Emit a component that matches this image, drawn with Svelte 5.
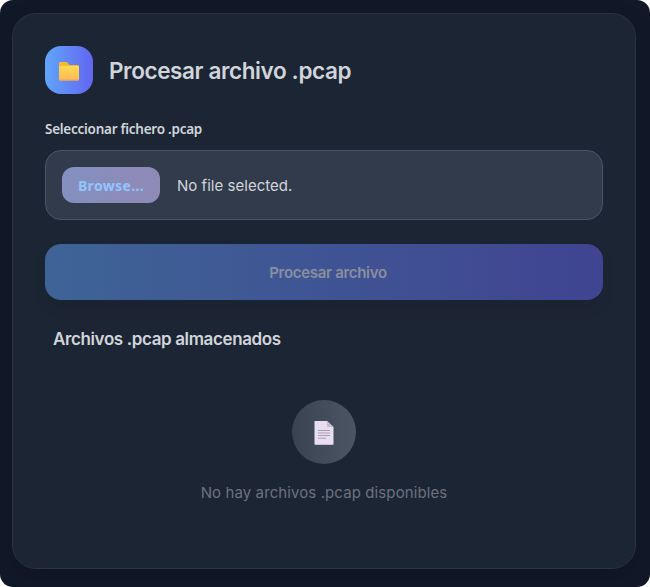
<script>
  const files = [];
  let selected = $state(null);
  let picker;
</script>

<main class="page">
  <section class="card">
    <header>
      <span class="badge">
        <svg width="22" height="20" viewBox="0 0 22 20" aria-hidden="true">
          <defs>
            <linearGradient id="folder" x1="0" y1="0" x2="0" y2="1">
              <stop offset="0" stop-color="#ffdb50" />
              <stop offset="1" stop-color="#ffb758" />
            </linearGradient>
          </defs>
          <path d="M1 2q0-1 1-1h6q1 0 1.600.8L11.500 4H20q1 0 1 1v5H1z" fill="#f9b73c" />
          <rect x="1" y="5" width="20" height="14.500" rx="1" fill="url(#folder)" />
          <path d="M1.500 19h19" stroke="#eda552" />
        </svg>
      </span>
      <h1>Procesar archivo .pcap</h1>
    </header>

    <label for="capture">Seleccionar fichero .pcap</label>
    <div class="picker">
      <button class="browse" onclick={() => picker.click()}>Browse...</button>
      <span class="name">{selected ?? 'No file selected.'}</span>
      <input id="capture" type="file" accept=".pcap" hidden bind:this={picker}
        onchange={(e) => (selected = e.currentTarget.files[0]?.name ?? null)} />
    </div>

    <button class="process" disabled={!selected}><span>Procesar archivo</span></button>

    <h2>Archivos .pcap almacenados</h2>
    {#if files.length === 0}
      <div class="empty">
        <span class="circle">
          <svg width="20" height="26" viewBox="0 0 20 26" aria-hidden="true">
            <path d="M1 1h12l6.500 6v17.500H1q-.5 0-.5-.5V1.500Q.5 1 1 1z" fill="#e7dff0" />
            <path d="M13 1l6.500 6H14q-1 0-1-1z" fill="#c5bdcc" />
            <path d="M1 24.500h18" stroke="#cabcdc" />
            <path d="M4 10.500h12M4 13h12M4 15.500h12M4 18.200h8" stroke="#a99fb1" stroke-width="1.100" />
          </svg>
        </span>
        <p>No hay archivos .pcap disponibles</p>
      </div>
    {/if}
  </section>
</main>

<style>
  :global(body) { background: #fff; }
  * { box-sizing: border-box; }
  .page {
    height: 587px;
    padding: 13px 14px 18px 12px;
    border-radius: 13px;
    background: #111827;
    overflow: hidden;
    font-family: Inter, sans-serif;
    color: #d1d5db;
  }
  .card {
    height: 556px;
    padding: 32px;
    border: 1px solid #2a3441;
    border-radius: 24px;
    background: #1c2533;
    box-shadow: 0 8px 24px rgba(0, 0, 0, 0.13);
  }
  header { display: flex; align-items: center; gap: 16px; height: 48px; }
  .badge {
    display: flex; align-items: center; justify-content: center;
    width: 48px; height: 48px; padding: 2px 1px 0 0;
    border-radius: 16px;
    background: linear-gradient(90deg, #60a5fa, #6366f1);
  }
  h1 { margin: 0; padding-top: 2px; font-size: 22.5px; line-height: 32px; font-weight: 600; letter-spacing: -0.39px; white-space: nowrap; }
  label {
    display: block; margin: 25px 0 11px;
    font: 600 13.500px/20px "Noto Sans", sans-serif;
    letter-spacing: -0.26px;
  }
  .picker {
    display: flex; align-items: center; gap: 17px;
    height: 70px; padding: 0 16px;
    border: 1px solid #4b5563; border-radius: 16px;
    background: #323b4b;
  }
  button { border: 0; }
  .browse {
    width: 98px; height: 36px; padding: 1px 0 0;
    border-radius: 12px;
    background: linear-gradient(90deg, #8490c0, #9089b6);
    color: #93c5fd;
    font: 700 14px/20px "Noto Sans", sans-serif;
    letter-spacing: 0.36px;
  }
  .name { padding-top: 2px; font-size: 15px; line-height: 24px; letter-spacing: 0.03px; white-space: nowrap; }
  .process {
    display: block; width: 100%; height: 56px; margin-top: 24px; padding: 2px 0 0 8px;
    border-radius: 16px;
    background: linear-gradient(90deg, #3e6497, #404491);
    box-shadow: 0 8px 15px rgba(0, 0, 0, 0.06);
    color: #898f9e;
    font: 600 15px/24px Inter, sans-serif;
    letter-spacing: -0.3px;
  }
  h2 { margin: 26px 0 0 8px; font-size: 17px; line-height: 27px; font-weight: 600; letter-spacing: -0.38px; white-space: nowrap; }
  .empty { display: flex; flex-direction: column; align-items: center; padding-top: 47px; }
  .circle {
    display: flex; align-items: center; justify-content: center;
    width: 64px; height: 64px; padding-top: 1px;
    border-radius: 50%;
    background: linear-gradient(90deg, #394351, #4b5563);
  }
  p { margin: 17px 0 0; font-size: 15px; line-height: 24px; color: #6b7280; letter-spacing: 0.1px; white-space: nowrap; }
</style>
